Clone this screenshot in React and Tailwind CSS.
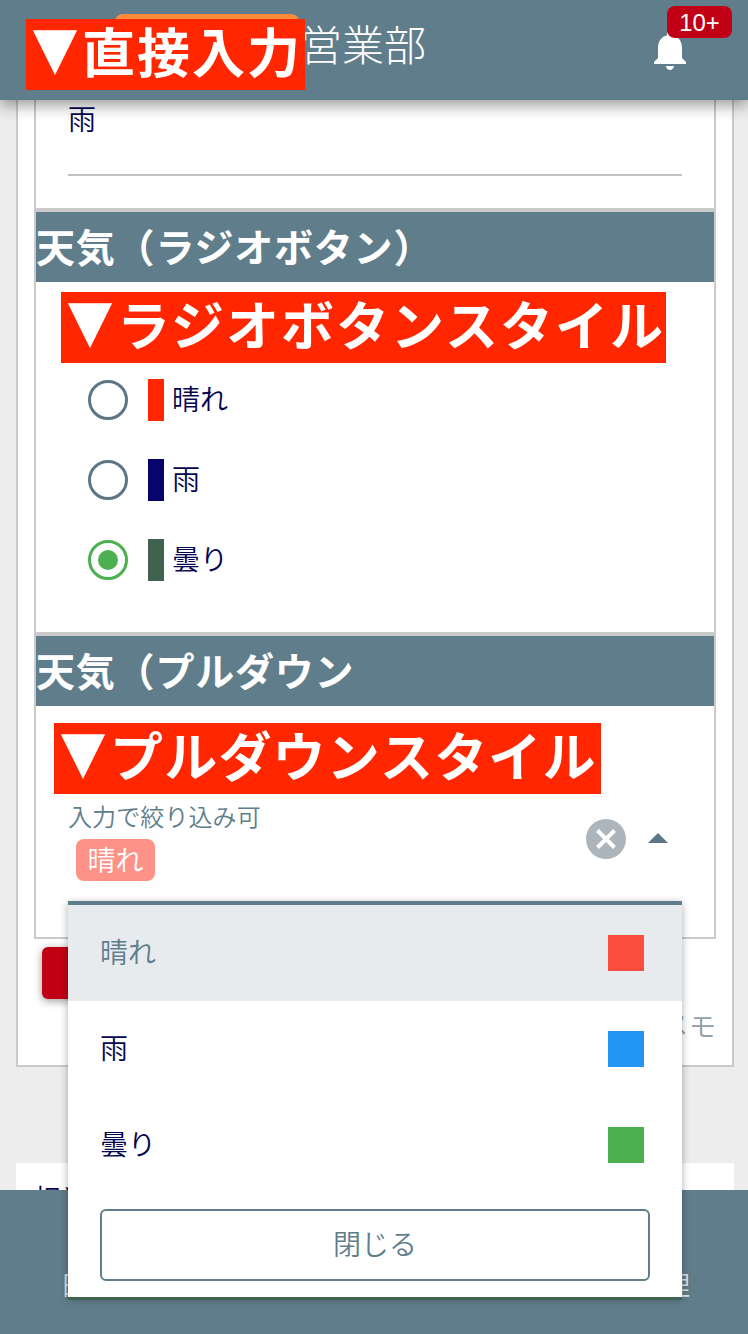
import React from "react";

const radios = [
  { label: "晴れ", bar: "bg-[#ff2600]", on: false },
  { label: "雨", bar: "bg-[#05056b]", on: false },
  { label: "曇り", bar: "bg-[#41624f]", on: true },
];

const options = [
  { label: "晴れ", row: "bg-[#e7ebee] text-[#607d8b]", swatch: "bg-[#fa4f3e]" },
  { label: "雨", row: "text-[#05054f]", swatch: "bg-[#2196f3]" },
  { label: "曇り", row: "text-[#05054f]", swatch: "bg-[#4caf50]" },
];

function SectionTitle({ children }) {
  return (
    <h2 className="flex h-[74px] shrink-0 items-center border-t-4 border-[#cacaca] bg-[#607d8b] text-[39px] leading-none font-bold tracking-[0.8px] whitespace-nowrap text-white">
      <span className="-translate-y-[2px]">{children}</span>
    </h2>
  );
}

function Radio({ label, bar, on }) {
  return (
    <div className="flex h-20 items-center">
      <span
        className={
          on
            ? "flex size-10 items-center justify-center rounded-full border-[3px] border-[#4caf50]"
            : "flex size-10 items-center justify-center rounded-full border-[3px] border-[#5b7783]"
        }
      >
        {on && <span className="size-5 rounded-full bg-[#4caf50]" />}
      </span>
      <span className={`ml-5 h-[42px] w-4 ${bar}`} />
      <span className="ml-2 -translate-y-[2px] text-[28px] leading-none text-[#05054f]">{label}</span>
    </div>
  );
}

function Callout({ className, children }) {
  return (
    <div className={`absolute z-30 flex h-[71px] items-center bg-[#ff2600] pl-[2px] text-[53px] leading-none font-bold whitespace-nowrap text-white ${className}`}>
      <span className="w-[54px] shrink-0 -translate-y-[7px] scale-y-[1.17] text-center text-[47px] tracking-normal">▼</span>
      <span className="-translate-y-[4px]">{children}</span>
    </div>
  );
}

export default function App() {
  return (
    <div className="relative flex h-[1334px] w-[748px] flex-col overflow-hidden bg-[#ededed] font-['Noto_Sans_CJK_JP',sans-serif] font-[350]">
      <header className="relative z-10 flex h-[100px] shrink-0 items-start justify-between bg-[#607d8b] text-white shadow-[0_4px_16px_rgba(0,0,0,0.45)]">
        <div className="flex pt-3.5 pl-[115px]">
          <span className="h-10 w-[184px] rounded-lg bg-[#ff8c3a]" />
          <h1 className="mt-[6px] ml-px text-[42px] leading-[46px] font-light">営業部</h1>
        </div>
        <div className="relative mt-[26px] mr-[54px]">
          <svg viewBox="0 0 24 24" className="size-12 fill-white">
            <path d="M12 22c1.100 0 2-.9 2-2h-4c0 1.100.89 2 2 2zm6-6v-5c0-3.070-1.640-5.640-4.500-6.320V4c0-.83-.67-1.500-1.500-1.500s-1.500.67-1.500 1.500v.68C7.630 5.360 6 7.920 6 11v5l-2 2v1h16v-1l-2-2z" />
          </svg>
          <span className="absolute top-[-20px] left-[21px] flex h-8 w-[65px] items-center justify-center rounded-lg bg-[#c10015] font-['Liberation_Sans',sans-serif] text-2xl leading-none font-normal">
            <span className="translate-y-px">10+</span>
          </span>
        </div>
      </header>

      <main className="flex h-[1090px] shrink-0 flex-col overflow-hidden px-4 pr-3.5">
        <section className="flex h-[967px] shrink-0 flex-col border-x-2 border-b-2 border-[#cacaca] bg-white px-4">
          <div className="flex h-[839px] shrink-0 flex-col border-x-2 border-b-2 border-[#cacaca]">
            <div className="h-[108px] px-8">
              <div className="h-[76px] border-b-2 border-[#c2c2c2] pt-1 text-[28px] leading-7 text-[#05054f]">雨</div>
            </div>
            <SectionTitle>天気（ラジオボタン）</SectionTitle>
            <div className="h-[350px] pt-[78px] pl-[52px]">
              {radios.map((r) => (
                <Radio key={r.label} {...r} />
              ))}
            </div>
            <SectionTitle>天気（プルダウン</SectionTitle>
            <div className="flex grow justify-between px-8 pt-[98px]">
              <div>
                <div className="text-2xl leading-6 tracking-[0.1px] text-[#607d8b]">入力で絞り込み可</div>
                <div className="mt-[11px] ml-2 flex h-[42px] w-[79px] items-center justify-center rounded-lg bg-[#ff9288] text-[28px] leading-none text-white">
                  <span className="-translate-y-px">晴れ</span>
                </div>
              </div>
              <div className="mt-[15px] mr-3.5 flex h-10 items-center gap-[22px]">
                <svg viewBox="0 0 40 40" className="size-10">
                  <circle cx="20" cy="20" r="20" fill="#adb5bc" />
                  <path d="M11.500 11.500l17 17M28.500 11.500l-17 17" stroke="#fff" strokeWidth="4" />
                </svg>
                <svg viewBox="0 0 20 10" className="-mt-0.5 h-2.5 w-5">
                  <path d="M0 10L10 0l10 10z" fill="#5b7783" />
                </svg>
              </div>
            </div>
          </div>
          <div className="flex items-start justify-between pt-2 pl-2">
            <span className="h-[52px] w-[180px] rounded-md bg-[#c10015] shadow-[0_2px_8px_rgba(0,0,0,0.4)]" />
            <span className="mt-[65px] text-[27px] leading-7 text-[#90a0aa]">メモ</span>
          </div>
        </section>
        <section className="mt-24 h-[27px] shrink-0 bg-white pt-[21px] pl-[18px] text-[28px] leading-7 text-[#05054f]">
          担当
        </section>
      </main>

      <nav className="flex h-36 shrink-0 justify-between bg-[#607d8b] pt-[81px] pr-[58px] pl-[60px] text-[26px] leading-[26px] text-[#dce3e6]">
        <span>日次作業</span>
        <span>活動報告</span>
        <span>管理</span>
      </nav>

      <div className="absolute top-[901px] left-[68px] z-20 flex h-[396px] w-[614px] flex-col border-t-4 border-[#607d8b] bg-white shadow-[0_3px_0_#41624f,0_2px_8px_rgba(0,0,0,0.32)]">
        {options.map((o) => (
          <div key={o.label} className={`flex h-24 items-center justify-between pr-[38px] pl-8 text-[28px] leading-none ${o.row}`}>
            <span className="-translate-y-[2px]">{o.label}</span>
            <span className={`size-9 ${o.swatch}`} />
          </div>
        ))}
        <button className="mx-8 mt-4 h-[72px] rounded-md border-2 border-[#607d8b] text-[28px] leading-none text-[#607d8b]">
          <span className="inline-block -translate-y-[2px]">閉じる</span>
        </button>
      </div>

      <Callout className="top-[19px] left-[26px] w-[279px] tracking-[2px]">直接入力</Callout>
      <Callout className="top-[292px] left-[61px] w-[605px] tracking-[2px]">ラジオボタンスタイル</Callout>
      <Callout className="top-[723px] left-[54px] w-[547px] tracking-[1.2px]">プルダウンスタイル</Callout>
    </div>
  );
}
